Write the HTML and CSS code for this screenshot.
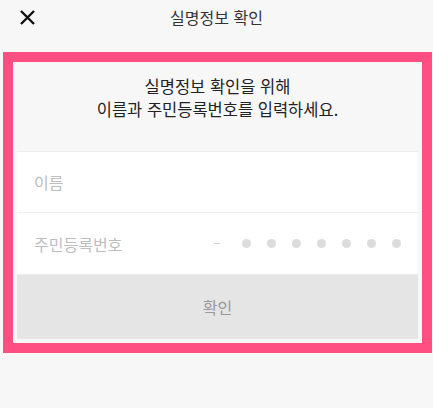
FILE: index.html
```html
<!DOCTYPE html>
<html lang="ko">
<head>
<meta charset="utf-8">
<link rel="stylesheet" href="styles.css">
</head>
<body>
<header class="topbar">
  <button class="close" aria-label="닫기">
    <svg width="17" height="17" viewBox="0 0 17 17"><path d="M2 2L15 15M15 2L2 15" stroke="#111" stroke-width="2.4" fill="none"/></svg>
  </button>
  <h1 class="title">실명정보 확인</h1>
  <span></span>
</header>
<section class="frame">
  <p class="intro">실명정보 확인을 위해<br>이름과 주민등록번호를 입력하세요.</p>
  <div class="card">
    <div class="field field-name"><span class="ph">이름</span></div>
    <div class="field field-id">
      <span class="ph">주민등록번호</span>
      <div class="mask">
        <span class="dash"></span>
        <span class="dot"></span><span class="dot"></span><span class="dot"></span><span class="dot"></span><span class="dot"></span><span class="dot"></span><span class="dot"></span>
      </div>
    </div>
    <button class="confirm">확인</button>
  </div>
</section>
</body>
</html>
```
FILE: styles.css
```css
* { box-sizing: border-box; }
html, body { margin: 0; padding: 0; }
body {
  background: #f7f7f7;
  font-family: "Noto Sans CJK KR", "Noto Sans", sans-serif;
  color: #333;
  width: 433px;
  height: 408px;
  overflow: hidden;
}
.topbar {
  height: 34px;
  display: grid;
  grid-template-columns: 1fr auto 1fr;
  align-items: center;
}
.close {
  justify-self: start;
  margin-left: 19px;
  padding: 0;
  border: 0;
  background: none;
  display: flex;
  width: 17px;
  height: 17px;
}
.title {
  margin: 0;
  font-size: 16px;
  font-weight: 400;
  color: #333;
  line-height: 20px;
}
.frame {
  margin: 18px 1px 0 3px;
  border: 10px solid #ff4f82;
  background: #f7f7f7;
  padding: 0 4px 4px 4px;
}
.intro {
  margin: 0;
  padding: 13px 0 30px;
  text-align: center;
  font-size: 16.5px;
  line-height: 23px;
  color: #222;
}
.card {
  background: #fff;
  border-top: 1px solid #eeeeee;
}
.field {
  display: flex;
  align-items: center;
  padding: 0 17px 0 17px;
  border-bottom: 1px solid #eeeeee;
}
.field-name { height: 61px; }
.field-id { height: 62px; justify-content: space-between; }
.ph {
  font-size: 16px;
  color: #bdbdbd;
}
.mask {
  display: flex;
  align-items: center;
  gap: 16px;
}
.dash {
  width: 6px;
  height: 1.5px;
  background: #cfcfcf;
  margin-right: 6px;
}
.dot {
  width: 9px;
  height: 9px;
  border-radius: 50%;
  background: #dcdcdc;
}
.confirm {
  display: block;
  width: 100%;
  height: 64px;
  border: 0;
  background: #e5e5e5;
  font-family: inherit;
  font-size: 16px;
  color: #999;
  padding: 0;
}
```
